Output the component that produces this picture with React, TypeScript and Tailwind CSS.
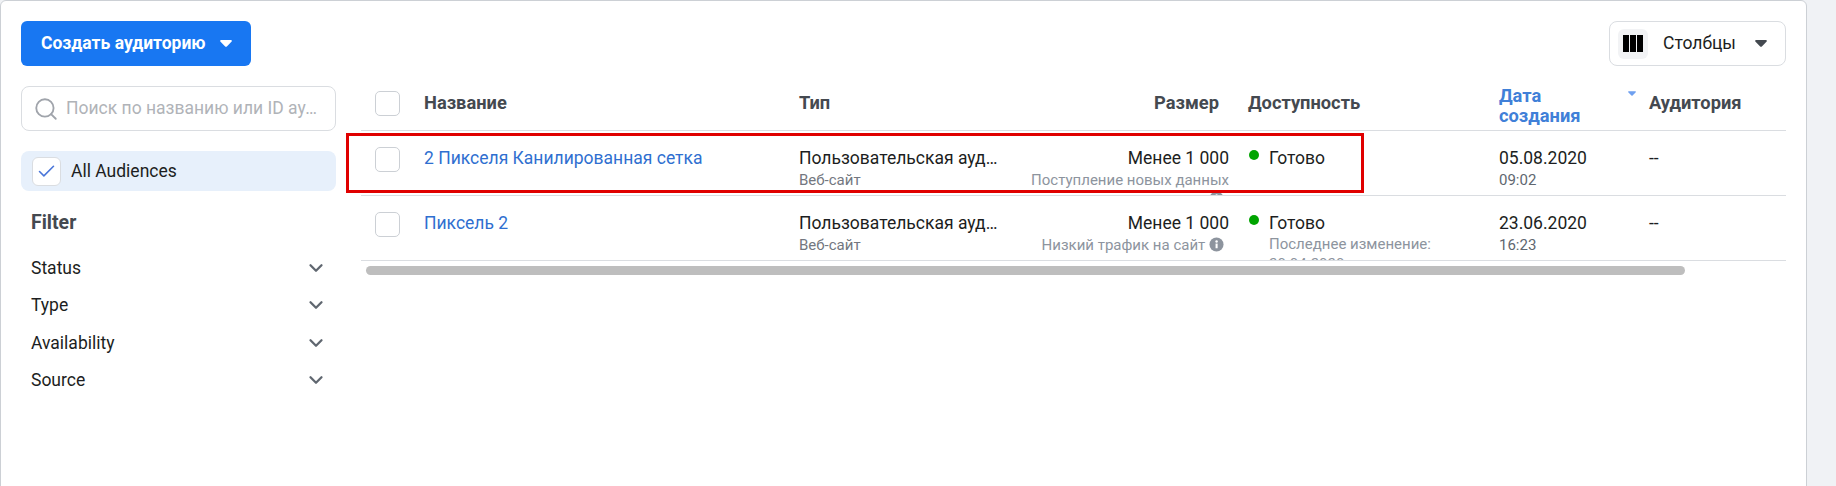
import React from 'react'
import { Search, ChevronDown, Check } from 'lucide-react'

const FILTERS = ['Status', 'Type', 'Availability', 'Source']

const ROWS = [
  {
    name: '2 Пикселя Канилированная сетка',
    note: 'Поступление новых данных',
    wrapInfo: true,
    changed: '',
    date: '05.08.2020',
    time: '09:02',
  },
  {
    name: 'Пиксель 2',
    note: 'Низкий трафик на сайт',
    wrapInfo: false,
    changed: 'Последнее изменение: 20.04.2020',
    date: '23.06.2020',
    time: '16:23',
  },
]

function Caret({ className }: { className: string }) {
  return (
    <svg viewBox="0 0 14 8" className={className} fill="currentColor">
      <path d="M1.2 0h11.6c.9 0 1.4 1 .8 1.7L8 7.4c-.5.6-1.500.6-2 0L.4 1.700C-.2 1 .3 0 1.200 0z" />
    </svg>
  )
}

function InfoIcon({ className }: { className: string }) {
  return (
    <svg viewBox="0 0 16 16" className={className}>
      <circle cx="8" cy="8" r="7.500" fill="#8d949e" />
      <rect x="7" y="7" width="2.200" height="5" fill="#fff" />
      <circle cx="8.100" cy="4.700" r="1.300" fill="#fff" />
    </svg>
  )
}

function Box() {
  return <div className="w-[25px] h-[25px] rounded-[5px] border border-[#ccd0d5] bg-white shrink-0" />
}

export default function App() {
  return (
    <div className="w-[1836px] h-[486px] overflow-hidden bg-[#f0f2f5] font-['Roboto',sans-serif] text-[17.500px] text-[#1c1e21]">
      <div className="relative w-[1807px] h-[520px] bg-white border border-[#ccd0d5] rounded-[6px] pt-[20px] pl-[20px] pr-[20px]">
        <div className="flex items-center justify-between h-[45px]">
          <button className="flex items-center w-[230px] h-[45px] rounded-[6px] bg-[#1877f2] text-white font-bold pl-[20px]">
            Создать аудиторию
            <Caret className="w-[12px] h-[7px] ml-[14px]" />
          </button>
          <button className="flex items-center w-[177px] h-[45px] rounded-[8px] border border-[#dadde1] bg-white pl-[8px]">
            <span className="flex items-center justify-center w-[30px] h-[30px] rounded-[6px] bg-[#f2f3f5] gap-[1.500px]">
              <span className="w-[5.500px] h-[17px] bg-black" />
              <span className="w-[5.500px] h-[17px] bg-black" />
              <span className="w-[5.500px] h-[17px] bg-black" />
            </span>
            <span className="ml-[15px]">Столбцы</span>
            <Caret className="w-[12px] h-[7px] ml-[19px] text-[#444950]" />
          </button>
        </div>

        <div className="flex mt-[20px]">
          <aside className="w-[315px] shrink-0">
            <div className="flex items-center h-[45px] rounded-[8px] border border-[#dadde1] pl-[11px]">
              <Search className="w-[26px] h-[26px] text-[#a0a4ab] shrink-0" strokeWidth={1.7} />
              <span className="ml-[7px] text-[#b0b3b8] truncate w-[258px]">Поиск по названию или ID аудитории</span>
            </div>
            <div className="flex items-center h-[40px] mt-[20px] rounded-[8px] bg-[#e7f0fb] pl-[11px]">
              <span className="flex items-center justify-center w-[29px] h-[29px] rounded-[6px] border border-[#dadde1] bg-white">
                <Check className="w-[21px] h-[21px] text-[#4a76d9]" strokeWidth={1.800} />
              </span>
              <span className="ml-[10px]">All Audiences</span>
            </div>
            <h3 className="mt-[21px] pl-[10px] text-[19.500px] leading-[22px] font-bold text-[#444950]">Filter</h3>
            <ul className="mt-[15px] pl-[10px] pr-[9px]">
              {FILTERS.map(f => (
                <li key={f} className="flex items-center justify-between h-[37.500px]">
                  {f}
                  <ChevronDown className="w-[22px] h-[22px] text-[#606770]" strokeWidth={2.500} />
                </li>
              ))}
            </ul>
          </aside>

          <div className="ml-[25px] w-[1425px]">
            <div className="flex items-center h-[45px] pb-[10px] border-b border-[#dadde1] font-bold text-[18.300px] text-[#444950]">
              <div className="w-[63px] pl-[14px]"><Box /></div>
              <div className="w-[375px]">Название</div>
              <div className="w-[200px]">Тип</div>
              <div className="w-[220px] text-right">Размер</div>
              <div className="w-[29px]" />
              <div className="w-[251px]">Доступность</div>
              <div className="relative w-[150px] mt-[5px] leading-[20px] text-[#4080d8]">
                Дата<br />создания
                <Caret className="absolute right-[13px] top-[5px] w-[8px] h-[5px] text-[#6fa0f0]" />
              </div>
              <div>Аудитория</div>
            </div>

            {ROWS.map(r => (
              <div key={r.name} className="flex h-[65px] overflow-hidden border-b border-[#dadde1] pt-[16px]">
                <div className="w-[63px] pl-[14px]"><Box /></div>
                <div className="w-[375px] leading-[22px] text-[#2f6fd0]">{r.name}</div>
                <div className="w-[200px]">
                  <div className="truncate leading-[22px]">Пользовательская аудитория</div>
                  <div className="text-[15px] leading-[22px] text-[#737780]">Веб-сайт</div>
                </div>
                <div className="w-[230px] text-right">
                  <div className="leading-[22px]">Менее 1 000</div>
                  <div className="text-[15px] leading-[22px] text-[#8d949e]">
                    {r.note}
                    {r.wrapInfo ? <br /> : ' '}
                    <InfoIcon className={r.wrapInfo ? 'inline-block w-[15px] h-[15px] mr-[5px] align-top' : 'inline-block w-[15px] h-[15px] mr-[5px] align-[-2px]'} />
                  </div>
                </div>
                <div className="w-[20px]" />
                <div className="w-[250px] flex">
                  <span className="w-[10px] h-[10px] rounded-full bg-[#00a400] mt-[3px] mr-[10px] shrink-0" />
                  <div>
                    <div className="leading-[22px]">Готово</div>
                    <div className="w-[170px] text-[15px] leading-[20px] text-[#8d949e]">{r.changed}</div>
                  </div>
                </div>
                <div className="w-[150px]">
                  <div className="leading-[22px]">{r.date}</div>
                  <div className="text-[15px] leading-[22px] text-[#606770]">{r.time}</div>
                </div>
                <div className="leading-[22px]">--</div>
              </div>
            ))}

            <div className="w-[1319px] h-[9px] ml-[5px] mt-[5px] rounded-full bg-[#bebebe]" />
          </div>
        </div>

        <div className="absolute left-[345px] top-[132px] w-[1018px] h-[60px] border-[3px] border-[#e00000]" />
      </div>
    </div>
  )
}
